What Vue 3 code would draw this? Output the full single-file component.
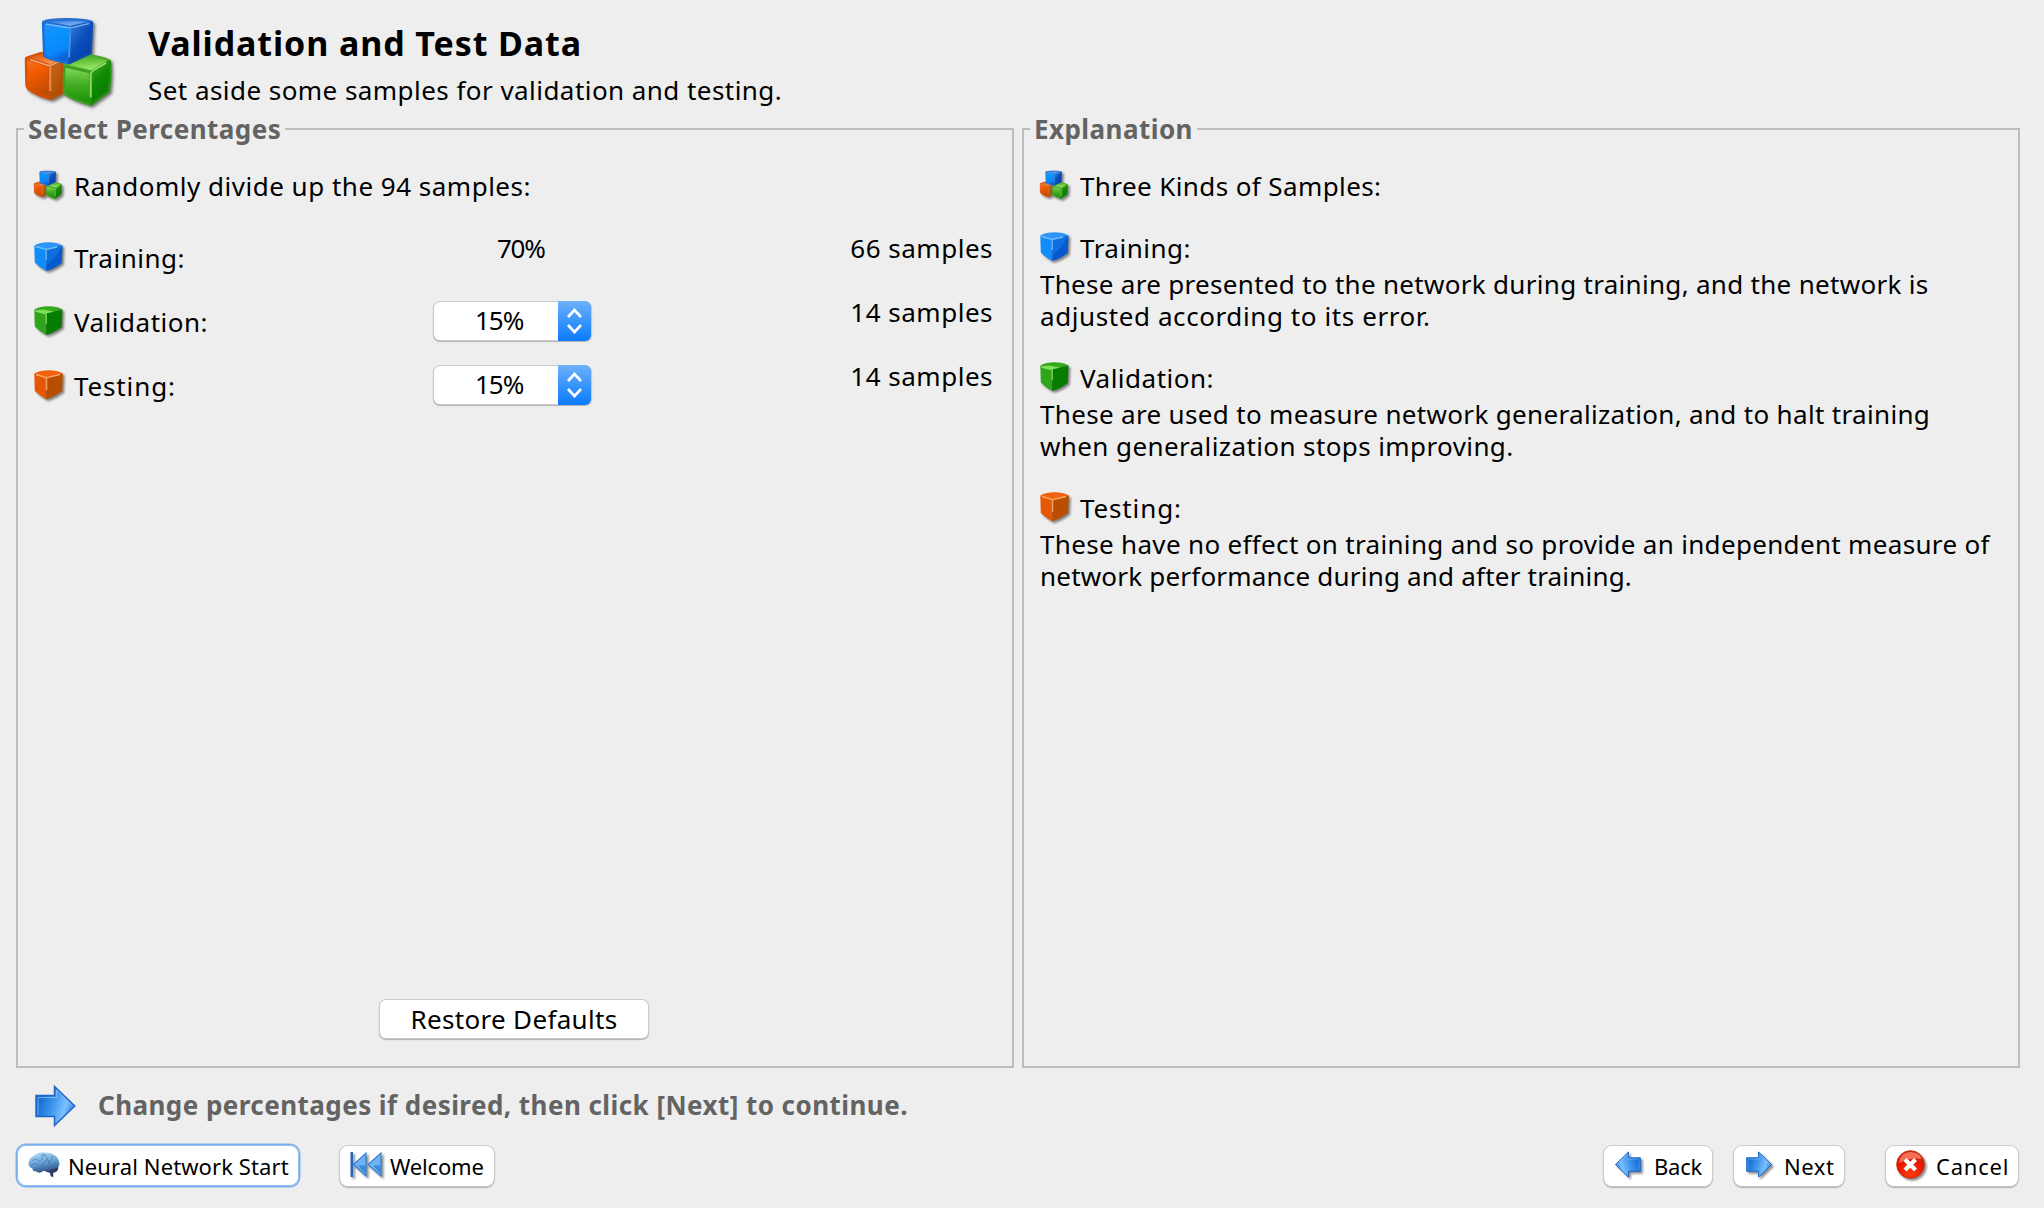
<script setup>
const shares = [
  { id: 'training', icon: 'cube-blue', label: 'Training:', percent: '70%', samples: '66 samples', editable: false },
  { id: 'validation', icon: 'cube-green', label: 'Validation:', percent: '15%', samples: '14 samples', editable: true },
  { id: 'testing', icon: 'cube-orange', label: 'Testing:', percent: '15%', samples: '14 samples', editable: true },
]

const kinds = [
  {
    id: 'training', icon: 'cube-blue', label: 'Training:',
    lines: [
      { text: 'These are presented to the network during training, and the network is', track: 'track-3' },
      { text: 'adjusted according to its error.', track: 'track-6' },
    ],
  },
  {
    id: 'validation', icon: 'cube-green', label: 'Validation:',
    lines: [
      { text: 'These are used to measure network generalization, and to halt training', track: 'track-33' },
      { text: 'when generalization stops improving.', track: 'track-4' },
    ],
  },
  {
    id: 'testing', icon: 'cube-orange', label: 'Testing:',
    lines: [
      { text: 'These have no effect on training and so provide an independent measure of', track: 'track-33' },
      { text: 'network performance during and after training.', track: 'track-2' },
    ],
  },
]
</script>

<template>
  <div class="wizard">
    <svg class="sprite" width="0" height="0" aria-hidden="true">
      <defs>
        <linearGradient id="bl" x1="0" y1="0" x2=".3" y2="1"><stop offset="0" stop-color="#2f8cf0" /><stop offset=".35" stop-color="#0a93ff" /><stop offset=".8" stop-color="#0a86fa" /><stop offset="1" stop-color="#0a62d4" /></linearGradient>
        <linearGradient id="br" x1="0" y1="0" x2=".8" y2="1"><stop offset="0" stop-color="#3a80dc" /><stop offset=".5" stop-color="#0a50bc" /><stop offset="1" stop-color="#0338a4" /></linearGradient>
        <linearGradient id="bt" x1="0" y1="0" x2=".5" y2="1"><stop offset="0" stop-color="#1c62c6" /><stop offset="1" stop-color="#8cc2ff" /></linearGradient>
        <linearGradient id="gl" x1="0.5" y1="0" x2=".5" y2="1"><stop offset="0" stop-color="#86dc58" /><stop offset=".45" stop-color="#44ae24" /><stop offset="1" stop-color="#149002" /></linearGradient>
        <linearGradient id="gr" x1="0" y1="0" x2=".5" y2="1"><stop offset="0" stop-color="#4aae28" /><stop offset=".5" stop-color="#108a02" /><stop offset="1" stop-color="#067a00" /></linearGradient>
        <linearGradient id="gt" x1=".3" y1="0" x2=".5" y2="1"><stop offset="0" stop-color="#45a620" /><stop offset="1" stop-color="#a2f46c" /></linearGradient>
        <linearGradient id="ol" x1="0" y1="0" x2=".3" y2="1"><stop offset="0" stop-color="#f47a2c" /><stop offset=".4" stop-color="#f45a00" /><stop offset="1" stop-color="#c44c04" /></linearGradient>
        <linearGradient id="or" x1="0" y1="0" x2=".5" y2="1"><stop offset="0" stop-color="#cf6a24" /><stop offset="1" stop-color="#ad4c00" /></linearGradient>
        <linearGradient id="ot" x1="0" y1="0" x2=".6" y2="1"><stop offset="0" stop-color="#d24c00" /><stop offset="1" stop-color="#ff9858" /></linearGradient>
        <linearGradient id="arrow" x1="0" y1=".3" x2="1" y2=".6"><stop offset="0" stop-color="#0b62d0" /><stop offset=".45" stop-color="#3f97ec" /><stop offset=".75" stop-color="#7cc0ff" /><stop offset="1" stop-color="#2d7de0" /></linearGradient>
        <linearGradient id="brain" x1=".3" y1="0" x2=".6" y2="1"><stop offset="0" stop-color="#b5dcf6" /><stop offset=".55" stop-color="#5f9dd2" /><stop offset="1" stop-color="#2e4780" /></linearGradient>
        <radialGradient id="red" cx=".5" cy=".85" r=".85"><stop offset="0" stop-color="#ff3a10" /><stop offset=".6" stop-color="#e81800" /><stop offset="1" stop-color="#c83018" /></radialGradient>
      </defs>

      <symbol id="cubes" viewBox="22 16 94 94">
        <g stroke-linejoin="round" stroke-width="2.400">
          <path fill="url(#ot)" stroke="#d65208" d="M27 58 41 53.500Q52 53 62 60L51 66Z" />
          <path fill="url(#ol)" stroke="#d65006" d="M26 59 50 67V99.500Q37 96 28.500 90Q26.500 88 26.500 85Z" />
          <path fill="url(#or)" stroke="#b65008" d="M50.500 67 62.500 60V94L52 99.500H50.500Z" />
          <path fill="none" stroke="#ffb98a" stroke-width="1.500" opacity=".8" d="M30 60 47 65.500Q50 66.500 52 65.500L60 61.500" />
          <path fill="none" stroke="#ffb98a" stroke-width="2" opacity=".6" d="M50.500 67V92" />
          <path fill="url(#gt)" stroke="#4da92b" d="M65.500 66 87 55.500Q99 56 110.500 61L92 72Z" />
          <path fill="url(#gl)" stroke="#3f9f25" d="M65 67 91.500 73V105.500Q77 102 65.500 95Q63.500 84 65 67Z" />
          <path fill="url(#gr)" stroke="#238f10" d="M91.500 73 110.800 62Q112 77 109.800 92L91.500 105.500Z" />
          <path fill="none" stroke="#b9f58c" stroke-width="1.800" opacity=".75" d="M91.500 98V75Q91.500 72.500 94 71L107 63.500" />
          <path fill="url(#bt)" stroke="#2670d2" d="M43.500 22Q49 19.300 67 19.300Q85 19.300 92.500 22L71 27Z" />
          <path fill="url(#bl)" stroke="#1670dc" d="M43.300 23 71 27.500 69.500 63.500Q55 62 44.500 56.500Z" />
          <path fill="url(#br)" stroke="#0f4cb4" d="M71 27.500 92.800 23 91.500 53.500 70 63.500Z" />
          <path fill="none" stroke="#8cc4ff" stroke-width="1.600" opacity=".8" d="M46 24 67 27.500Q71 28 74 27.300L90 23.500" />
          <path fill="none" stroke="#5aaeff" stroke-width="2" opacity=".75" d="M69.600 58 71 28.500" />
        </g>
      </symbol>

      <symbol id="cube-blue" viewBox="0 0 32 32">
        <path fill="#2e95f8" d="M.3 3.500Q6 .2 14.500 .2T28.500 3.500L12 8Z" />
        <path fill="#118cfb" d="M.3 3.500 12.200 7.500V29Q5 25 .8 20.500Z" />
        <path fill="#0659ce" d="M12.200 7.500 28.500 3.500 27.800 21Q20 27 12.200 29Z" />
        <path fill="#1478e4" d="M12.200 7.500 28.500 3.500 22 14 12.200 24Z" opacity=".7" />
        <path fill="none" stroke="#79c4ff" stroke-width="1.300" opacity=".85" d="M1.500 4.500 12.200 7.500 23 5M12.200 8V18" />
      </symbol>
      <symbol id="cube-green" viewBox="0 0 32 32">
        <path fill="#35a81c" d="M.3 3.500Q6 .2 14.500 .2T28.500 3.500L12 8Z" />
        <path fill="#2fa51c" d="M.3 3.500 12.200 7.500V29Q5 25 .8 20.500Z" />
        <path fill="#067d00" d="M12.200 7.500 28.500 3.500 27.800 21Q20 27 12.200 29Z" />
        <path fill="#7fe052" d="M1.200 4.500 12 7.500 20 5.500 9 3.500Z" />
        <path fill="none" stroke="#8fe868" stroke-width="1.300" opacity=".85" d="M1.500 5 12.200 7.800M12.200 8V18" />
      </symbol>
      <symbol id="cube-orange" viewBox="0 0 32 32">
        <path fill="#f0620f" d="M.3 3.500Q6 .2 14.500 .2T28.800 3.500L12 8Z" />
        <path fill="#e65703" d="M.3 3.500 12.200 7.500V29.500Q5 25 .8 21Z" />
        <path fill="#b94d00" d="M12.200 7.500 28.800 3.500 28.200 21Q20 27 12.200 29.500Z" />
        <path fill="none" stroke="#ffb074" stroke-width="1.500" opacity=".85" d="M2 4.500 12.500 7.800 26 4.500M12.500 8.500V20" />
      </symbol>

      <symbol id="arrow-right" viewBox="0 0 42 42">
        <path fill="url(#arrow)" stroke="#1f66c8" stroke-width="1.500" d="M1 10.500H19.500V1.500L39.800 21 19.500 40.500V31.500H1Z" />
        <path fill="none" stroke="#8cc4f8" stroke-width="1" opacity=".75" d="M3 29.500V12.500H21.500V5L37.500 21" />
      </symbol>
    </svg>

    <header class="heading">
      <svg class="heading-icon shadowed"><use href="#cubes" /></svg>
      <div class="heading-text">
        <h1>Validation and Test Data</h1>
        <p>Set aside some samples for validation and testing.</p>
      </div>
    </header>

    <main class="panels">
      <fieldset class="panel">
        <legend>Select Percentages</legend>
        <div class="item intro">
          <svg class="icon trio small-shadow"><use href="#cubes" /></svg>
          <span>Randomly divide up the 94 samples:</span>
        </div>
        <div v-for="s in shares" :key="s.id" class="share">
          <div class="item share-label">
            <svg class="icon small-shadow"><use :href="'#' + s.icon" /></svg>
            <span :class="{ 'track-9': s.id === 'testing' }">{{ s.label }}</span>
          </div>
          <div v-if="s.editable" class="combo">
            <span class="combo-value">{{ s.percent }}</span>
            <span class="combo-button">
              <svg width="17" height="26" viewBox="0 0 17 26"><path d="M2 9 8.500 2 15 9M2 17 8.500 24 15 17" fill="none" stroke="#fff" stroke-width="2.600" /></svg>
            </span>
          </div>
          <div v-else class="fixed">{{ s.percent }}</div>
          <div class="count">{{ s.samples }}</div>
        </div>
        <button class="restore">Restore Defaults</button>
      </fieldset>

      <fieldset class="panel">
        <legend>Explanation</legend>
        <div class="item intro">
          <svg class="icon trio small-shadow"><use href="#cubes" /></svg>
          <span class="track-4">Three Kinds of Samples:</span>
        </div>
        <section v-for="k in kinds" :key="k.id" class="kind">
          <div class="item">
            <svg class="icon small-shadow"><use :href="'#' + k.icon" /></svg>
            <span :class="{ 'track-9': k.id === 'testing' }">{{ k.label }}</span>
          </div>
          <p class="kind-text">
            <span v-for="l in k.lines" :key="l.text" :class="l.track">{{ l.text }}</span>
          </p>
        </section>
      </fieldset>
    </main>

    <div class="prompt">
      <svg class="prompt-icon"><use href="#arrow-right" /></svg>
      <span>Change percentages if desired, then click [Next] to continue.</span>
    </div>

    <nav class="actions">
      <button class="btn start">
        <svg class="brain" viewBox="0 0 34 28">
          <path fill="#2d3762" d="M18 17 31 15Q32 20 28 21.500L26 22V26.500L23.500 25.500 22.500 22Q18 21.500 16 19Z" />
          <path fill="url(#brain)" d="M.5 13Q1 6.500 6 4.500 10 .8 17 1 25 1 29 5 33 9 32.200 14.500 30 18 25 18 20 21 16.500 20 12 23.500 8 20.500 5 21 4.500 17.500 .8 16.500 .5 13Z" />
          <path fill="none" stroke="#426fa6" stroke-width="1" opacity=".6" d="M4 10Q7 6 10 9T15 6 20 8 25 5M3 14Q8 11 11 14T17 11 22 13 29 10M7 18Q11 16 13 18M13 4Q15 2 18 4M19 17Q22 14 27 16M15 12V16" />
        </svg>
        <span>Neural Network Start</span>
      </button>
      <button class="btn welcome">
        <svg class="rewind small-shadow" viewBox="0 0 34 28">
          <path fill="#2467bd" d="M.5 1H3V26H.5Z" />
          <path fill="#6eb4f3" stroke="#3a7ed0" stroke-width="1.200" d="M3.500 13.500 16 2V25ZM18 13.500 31 2V25Z" />
          <path fill="#3c8ade" d="M8 14.500H15.500V23ZM23 14.500H30.500V23Z" />
        </svg>
        <span>Welcome</span>
      </button>
      <button class="btn back">
        <svg class="mini flip"><use href="#arrow-right" /></svg>
        <span>Back</span>
      </button>
      <button class="btn next">
        <svg class="mini small-shadow"><use href="#arrow-right" /></svg>
        <span>Next</span>
      </button>
      <button class="btn cancel">
        <svg class="stop small-shadow" viewBox="0 0 30 30">
          <circle cx="14.500" cy="14.500" r="13.800" fill="url(#red)" stroke="#c92a12" stroke-width="1" />
          <path fill="#ff8a72" opacity=".75" d="M3 13Q4 2.500 14.500 2 24 2.500 25.500 9 15 7 3 13Z" />
          <path d="M9 9.500 19.500 20M19.500 9.500 9 20" stroke="#fff" stroke-width="4.200" fill="none" />
        </svg>
        <span>Cancel</span>
      </button>
    </nav>
  </div>
</template>

<style>
body { background: #eee; }
</style>

<style scoped>
.wizard {
  box-sizing: border-box;
  width: 2044px;
  height: 1208px;
  overflow: hidden;
  display: flex;
  flex-direction: column;
  background: #eee;
  color: #000;
  font-family: "Noto Sans", "Open Sans", sans-serif;
  font-size: 26px;
  line-height: 32px;
  letter-spacing: 0.5px;
  white-space: nowrap;
}
.sprite { position: absolute; }
svg { display: block; flex: none; overflow: visible; }
h1, p { margin: 0; }
.shadowed { filter: drop-shadow(2px 2px 1.5px rgba(0, 0, 0, 0.5)); }
.small-shadow { filter: drop-shadow(2px 2px 1px rgba(0, 0, 0, 0.45)); }
.track-2 { letter-spacing: 0.2px; }
.track-3 { letter-spacing: 0.3px; }
.track-33 { letter-spacing: 0.33px; }
.track-4 { letter-spacing: 0.4px; }
.track-6 { letter-spacing: 0.59px; }
.track-9 { letter-spacing: 0.87px; }

.heading { display: flex; height: 112px; padding-left: 22px; flex: none; box-sizing: border-box; }
.heading-icon { width: 93px; height: 93px; margin: 16px 1px 0 0; }
.heading-text { padding: 23px 0 0 32px; }
h1 { font-size: 34px; line-height: 40px; font-weight: 700; letter-spacing: 0.9px; }
.heading-text p { margin-top: 11px; letter-spacing: 0.45px; }

.panels { display: flex; gap: 8px; padding: 0 24px 0 16px; height: 956px; flex: none; }
.panel {
  flex: 1 1 0;
  min-width: 0;
  box-sizing: border-box;
  margin: 0;
  padding: 0 19px 28px 16px;
  border: 2px solid #bdbdbd;
  display: flex;
  flex-direction: column;
}
legend {
  margin-left: -10px;
  padding: 1px 4px;
  font-weight: 700;
  color: #636363;
  letter-spacing: 0.45px;
}
.item { display: flex; align-items: flex-start; gap: 8px; height: 32px; }
.icon { width: 32px; height: 32px; }
.trio { width: 30px; height: 30px; margin: 0 3px 0 -1px; }
.intro { margin: 24px 0 30px; }
.share { display: grid; grid-template-columns: 400px 157px 1fr; height: 64px; }
.share-label { margin-top: 10px; }
.fixed { padding-left: 63px; letter-spacing: -1.3px; }
.count { text-align: right; letter-spacing: 0.5px; }
.combo {
  display: flex;
  height: 38px;
  margin-top: 6px;
  background: #fff;
  border-radius: 6px;
  box-shadow: 0 0 0 1px #c9c9c9, 0 1px 1px 1px #b3b3b3;
}
.combo-value { flex: 1; padding-left: 41px; line-height: 37px; letter-spacing: -1px; }
.combo-button {
  width: 33px;
  height: 40px;
  margin-top: -1px;
  display: flex;
  align-items: center;
  justify-content: center;
  border-radius: 0 6px 6px 0;
  background: linear-gradient(#6cb2fb, #3a95fb 50%, #0a7aff);
}
.restore, .btn {
  font-family: inherit;
  color: #000;
  background: #fff;
  border: 0;
  padding: 0;
  box-sizing: border-box;
  box-shadow: 0 0 0 1px #cacaca, 0 1px 1px 1px #b0b0b0;
}
.restore {
  margin: auto 0 0 346px;
  width: 268px;
  height: 38px;
  border-radius: 6px;
  font-size: 26px;
  line-height: 37px;
  letter-spacing: 0.31px;
}
.kind { margin-bottom: 30px; }
.kind-text { margin-top: 4px; display: flex; flex-direction: column; }

.prompt {
  display: flex;
  height: 76px;
  flex: none;
  box-sizing: border-box;
  padding: 17px 0 0 35px;
  font-weight: 700;
  color: #636363;
  letter-spacing: 0.45px;
}
.prompt-icon { width: 42px; height: 42px; }
.prompt span { margin: 4px 0 0 21px; }

.actions { display: flex; padding-left: 17px; align-items: flex-start; }
.btn {
  display: flex;
  height: 40px;
  margin-top: 2px;
  border-radius: 8px;
  font-size: 22px;
  line-height: 40px;
}
.start {
  width: 282px;
  height: 41px;
  margin-top: 1px;
  padding-left: 11px;
  border-radius: 9px;
  letter-spacing: 0.1px;
  box-shadow: inset 0 0 0 1px #8ebef0, 0 0 0 1.500px #7db0ea;
}
.brain { width: 33px; height: 28px; margin-top: 6px; }
.start span { padding-left: 7px; line-height: 42px; }
.welcome { width: 154px; margin-left: 41px; padding-left: 10px; letter-spacing: -0.17px; }
.rewind { width: 34px; height: 28px; margin-top: 5px; }
.welcome span { padding-left: 6px; }
.back { width: 108px; margin-left: 1110px; padding-left: 10px; letter-spacing: -0.23px; }
.mini { width: 27px; height: 27px; margin-top: 5px; }
.flip { transform: scaleX(-1); filter: drop-shadow(-2px 2px 1px rgba(0, 0, 0, 0.45)); }
.back span { padding-left: 13px; }
.next { width: 110px; margin-left: 22px; padding-left: 12px; letter-spacing: 0.56px; }
.next span { padding-left: 11px; }
.cancel { width: 132px; margin-left: 42px; padding-left: 10px; letter-spacing: 0.8px; }
.stop { width: 30px; height: 30px; margin-top: 4px; }
.cancel span { padding-left: 10px; }
</style>
